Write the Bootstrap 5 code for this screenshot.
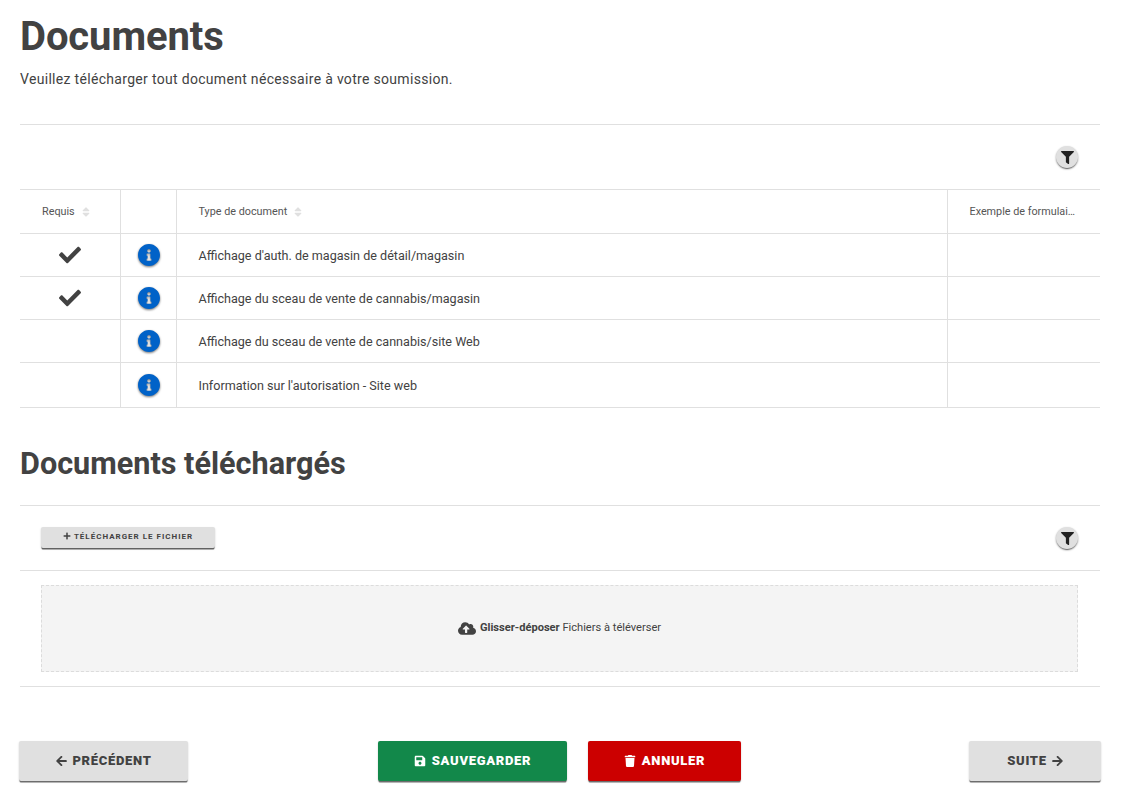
<!DOCTYPE html>
<html lang="fr">
<head>
<meta charset="utf-8">
<title>Documents</title>
<link href="https://cdn.jsdelivr.net/npm/bootstrap@5.3.0/dist/css/bootstrap.min.css" rel="stylesheet">
<style>
html, body { height: 798px; overflow: hidden; }
body { font-family: Roboto, "Liberation Sans", sans-serif; color: #424242; background: #fff; }
.page-wrap { width: 1127px; height: 798px; padding: 0 27px 0 20px; }
.page-title { font-size: 40px; font-weight: 700; line-height: 47px; letter-spacing: -.1px; margin: 13px 0 0; color: #424242; }
.page-sub { font-size: 14px; line-height: 20px; letter-spacing: .31px; margin: 9px 0 35px; color: #424242; }
.tool-row { height: 65px; border-top: 1px solid #e0e0e0; padding-right: 22px; }
.round-filter { width: 22px; height: 22px; padding: 0; border: 0; border-radius: 50%; background: #e0e0e0; box-shadow: 0 2px 1px -1px rgba(0,0,0,.35), 0 1px 2px rgba(0,0,0,.45); color: #212121; }
.round-filter svg { width: 13px; height: 13px; display: block; margin: 1px auto 0; }
.col-w-a { width: 100px; } .col-w-b { width: 56px; } .col-w-c { width: 153px; }
.doc-table { width: 100%; table-layout: fixed; margin: 0; border-collapse: collapse; color: #424242; }
.doc-table th, .doc-table td { padding: 2px 0 0 22px; border: 0; border-top: 1px solid #e0e0e0; border-right: 1px solid #e0e0e0; vertical-align: middle; white-space: nowrap; overflow: hidden; text-overflow: ellipsis; background: transparent; color: #424242; }
.doc-table th:last-child, .doc-table td:last-child { border-right: 0; }
.doc-table tr:last-child td { border-bottom: 1px solid #e0e0e0; height: 45px; }
.doc-table th { height: 44px; font-size: 10.8px; font-weight: 400; color: #555; }
.doc-table td { height: 43px; font-size: 12.58px; }
.doc-table .icon-cell { padding: 2px 0 0; text-align: center; }
.doc-table .info-cell { padding: 0 0 0 1px; text-align: center; }
.sort-ico { width: 8px; height: 12px; margin-left: 7px; vertical-align: -3px; fill: #e0e0e0; }
.check-ico { width: 22px; height: 22px; fill: #424242; display: block; margin: -3px auto 0; }
.info-ico { width: 22px; height: 22px; fill: #0062c8; display: block; margin: 0 auto; filter: drop-shadow(0 1px 1px rgba(0,0,0,.55)); }
.sub-title { font-size: 30.6px; font-weight: 700; line-height: 36px; margin: 38px 0 23px; color: #424242; }
.tool-row-two { height: 65px; border-top: 1px solid #e0e0e0; padding: 0 22px 0 21px; }
.upload-btn { width: 174px; height: 21px; margin-bottom: 2px; padding: 0; border: 0; border-radius: 2px; background: #e0e0e0; color: #424242; font-size: 8px; font-weight: 700; letter-spacing: 1px; box-shadow: 0 2px 0 -0.5px rgba(0,0,0,.55), 0 1px 2px rgba(0,0,0,.2); }
.upload-btn svg { width: 8px; height: 8px; fill: #424242; vertical-align: -1px; margin-right: 3px; }
.drop-holder { border-top: 1px solid #e0e0e0; border-bottom: 1px solid #e0e0e0; padding: 14px 22px 14px 21px; }
.drop-zone { height: 87px; background: #f4f4f4; border: 1px dashed #dcdcdc; font-size: 11.1px; color: #424242; }
.drop-zone svg { width: 18px; height: 15px; fill: #424242; margin-right: 4px; }
.action-row { display: grid; grid-template-columns: 1fr auto 1fr; margin: 54px -1px 0 -1px; }
.mid-actions { gap: 21px; margin-left: -1px; }
.act-btn { height: 40px; padding: 0; border: 0; border-radius: 2px; font-size: 13px; font-weight: 900; letter-spacing: .7px; text-transform: uppercase; box-shadow: 0 2px 0 -0.5px rgba(0,0,0,.5), 0 1px 2px rgba(0,0,0,.2); display: inline-flex; align-items: center; justify-content: center; gap: 5px; }
.act-btn svg { width: 11px; height: 12px; fill: currentColor; }
.btn-save svg, .btn-cancel svg { width: 12px; }
.btn-save, .btn-cancel { gap: 6px; }
.btn-prev { width: 169px; background: #e0e0e0; color: #424242; padding-left: 1px; }
.btn-next { width: 132px; background: #e0e0e0; color: #424242; }
.btn-save { width: 189px; background: #12884a; color: #fff; }
.btn-cancel { width: 153px; background: #cc0000; color: #fff; }
</style>
</head>
<body>
<svg width="0" height="0" class="position-absolute" aria-hidden="true">
  <symbol id="i-check" viewBox="0 0 512 512"><path d="M173.898 439.404l-166.4-166.4c-9.997-9.997-9.997-26.206 0-36.204l36.203-36.204c9.997-9.998 26.207-9.998 36.204 0L192 312.69 432.095 72.596c9.997-9.997 26.207-9.997 36.204 0l36.203 36.204c9.997 9.997 9.997 26.206 0 36.204l-294.4 294.401c-9.998 9.997-26.207 9.997-36.204-.001z"/></symbol>
  <symbol id="i-info" viewBox="8 8 496 496"><path d="M256 8C119.043 8 8 119.083 8 256c0 136.997 111.043 248 248 248s248-111.003 248-248C504 119.083 392.957 8 256 8zm0 110c23.196 0 42 18.804 42 42s-18.804 42-42 42-42-18.804-42-42 18.804-42 42-42zm56 254c0 6.627-5.373 12-12 12h-88c-6.627 0-12-5.373-12-12v-24c0-6.627 5.373-12 12-12h12v-64h-12c-6.627 0-12-5.373-12-12v-24c0-6.627 5.373-12 12-12h64c6.627 0 12 5.373 12 12v100h12c6.627 0 12 5.373 12 12v24z"/></symbol>
  <symbol id="i-filter" viewBox="0 0 512 512"><path fill="currentColor" d="M487.976 0H24.028C2.71 0-8.047 25.866 7.058 40.971L192 225.941V432c0 7.831 3.821 15.17 10.237 19.662l80 55.98C298.02 518.69 320 507.493 320 487.98V225.941l184.947-184.97C520.021 25.896 509.338 0 487.976 0z"/></symbol>
  <symbol id="i-sort" viewBox="0 0 320 512"><path d="M41 288h238c21.4 0 32.1 25.9 17 41L177 448c-9.4 9.4-24.6 9.4-33.900 0L24 329c-15.100-15.100-4.400-41 17-41zm255-105L177 64c-9.400-9.400-24.600-9.400-33.900 0L24 183c-15.100 15.100-4.400 41 17 41h238c21.400 0 32.100-25.900 17-41z"/></symbol>
  <symbol id="i-plus" viewBox="0 0 448 512"><path d="M416 208H272V64c0-17.670-14.330-32-32-32h-32c-17.670 0-32 14.330-32 32v144H32c-17.670 0-32 14.330-32 32v32c0 17.670 14.330 32 32 32h144v144c0 17.670 14.330 32 32 32h32c17.670 0 32-14.330 32-32V304h144c17.670 0 32-14.330 32-32v-32c0-17.670-14.330-32-32-32z"/></symbol>
  <symbol id="i-cloud" viewBox="0 0 640 512"><path d="M537.6 226.6c4.1-10.7 6.4-22.4 6.4-34.6 0-53-43-96-96-96-19.7 0-38.1 6-53.3 16.2C367 64.2 315.3 32 256 32c-88.4 0-160 71.6-160 160 0 2.7.1 5.4.2 8.1C40.2 219.8 0 273.2 0 336c0 79.5 64.5 144 144 144h368c70.7 0 128-57.3 128-128 0-61.9-44-113.6-102.4-125.4zM393.4 288H328v112c0 8.8-7.2 16-16 16h-48c-8.8 0-16-7.2-16-16V288h-65.4c-14.3 0-21.4-17.2-11.3-27.3l105.4-105.4c6.2-6.2 16.4-6.2 22.6 0l105.4 105.4c10.1 10.1 2.9 27.3-11.3 27.3z"/></symbol>
  <symbol id="i-left" viewBox="0 0 448 512"><path d="M257.500 445.100l-22.200 22.200c-9.400 9.400-24.600 9.400-33.900 0L7 273c-9.400-9.400-9.400-24.600 0-33.900L201.400 44.700c9.400-9.400 24.600-9.400 33.900 0l22.200 22.200c9.500 9.500 9.300 25-.4 34.300L136.600 216H424c13.300 0 24 10.700 24 24v32c0 13.300-10.700 24-24 24H136.600l120.500 114.800c9.800 9.300 10 24.800.4 34.300z"/></symbol>
  <symbol id="i-right" viewBox="0 0 448 512"><path d="M190.500 66.900l22.200-22.200c9.400-9.400 24.600-9.400 33.900 0L441 239c9.400 9.400 9.400 24.600 0 33.900L246.600 467.300c-9.400 9.400-24.600 9.400-33.900 0l-22.200-22.200c-9.500-9.500-9.300-25 .4-34.300L311.400 296H24c-13.300 0-24-10.700-24-24v-32c0-13.300 10.700-24 24-24h287.400L190.900 101.200c-9.800-9.300-10-24.800-.4-34.300z"/></symbol>
  <symbol id="i-save" viewBox="0 0 448 512"><path d="M433.941 129.941l-83.882-83.882A48 48 0 0 0 316.118 32H48C21.490 32 0 53.490 0 80v352c0 26.510 21.490 48 48 48h352c26.510 0 48-21.490 48-48V163.882a48 48 0 0 0-14.059-33.941zM224 416c-35.346 0-64-28.654-64-64 0-35.346 28.654-64 64-64s64 28.654 64 64c0 35.346-28.654 64-64 64zm96-304.520V212c0 6.627-5.373 12-12 12H76c-6.627 0-12-5.373-12-12V108c0-6.627 5.373-12 12-12h228.520c3.183 0 6.235 1.264 8.485 3.515l3.480 3.480A11.996 11.996 0 0 1 320 111.480z"/></symbol>
  <symbol id="i-trash" viewBox="0 0 448 512"><path d="M432 32H312l-9.400-18.700A24 24 0 0 0 281.100 0H166.800a23.720 23.720 0 0 0-21.400 13.300L136 32H16A16 16 0 0 0 0 48v32a16 16 0 0 0 16 16h416a16 16 0 0 0 16-16V48a16 16 0 0 0-16-16zM53.200 467a48 48 0 0 0 47.900 45h245.800a48 48 0 0 0 47.900-45L416 128H32z"/></symbol>
</svg>

<div class="page-wrap">
  <h1 class="page-title">Documents</h1>
  <p class="page-sub">Veuillez télécharger tout document nécessaire à votre soumission.</p>

  <div class="tool-row d-flex align-items-center justify-content-end">
    <button type="button" class="round-filter" aria-label="Filtrer"><svg><use href="#i-filter"/></svg></button>
  </div>

  <table class="table doc-table">
    <colgroup><col class="col-w-a"><col class="col-w-b"><col><col class="col-w-c"></colgroup>
    <thead>
      <tr>
        <th>Requis<svg class="sort-ico"><use href="#i-sort"/></svg></th>
        <th></th>
        <th>Type de document<svg class="sort-ico"><use href="#i-sort"/></svg></th>
        <th>Exemple de formulai…</th>
      </tr>
    </thead>
    <tbody>
      <tr>
        <td class="icon-cell"><svg class="check-ico"><use href="#i-check"/></svg></td>
        <td class="info-cell"><svg class="info-ico"><use href="#i-info"/></svg></td>
        <td>Affichage d'auth. de magasin de détail/magasin</td>
        <td></td>
      </tr>
      <tr>
        <td class="icon-cell"><svg class="check-ico"><use href="#i-check"/></svg></td>
        <td class="info-cell"><svg class="info-ico"><use href="#i-info"/></svg></td>
        <td>Affichage du sceau de vente de cannabis/magasin</td>
        <td></td>
      </tr>
      <tr>
        <td class="icon-cell"></td>
        <td class="info-cell"><svg class="info-ico"><use href="#i-info"/></svg></td>
        <td>Affichage du sceau de vente de cannabis/site Web</td>
        <td></td>
      </tr>
      <tr>
        <td class="icon-cell"></td>
        <td class="info-cell"><svg class="info-ico"><use href="#i-info"/></svg></td>
        <td>Information sur l'autorisation - Site web</td>
        <td></td>
      </tr>
    </tbody>
  </table>

  <h2 class="sub-title">Documents téléchargés</h2>

  <div class="tool-row-two d-flex align-items-center justify-content-between">
    <button type="button" class="upload-btn text-uppercase"><svg><use href="#i-plus"/></svg>Télécharger le fichier</button>
    <button type="button" class="round-filter" aria-label="Filtrer"><svg><use href="#i-filter"/></svg></button>
  </div>

  <div class="drop-holder">
    <div class="drop-zone d-flex align-items-center justify-content-center">
      <svg><use href="#i-cloud"/></svg><span><strong>Glisser-déposer</strong> Fichiers à téléverser</span>
    </div>
  </div>

  <div class="action-row">
    <div><button type="button" class="act-btn btn-prev"><svg><use href="#i-left"/></svg>Précédent</button></div>
    <div class="d-flex mid-actions">
      <button type="button" class="act-btn btn-save"><svg><use href="#i-save"/></svg>Sauvegarder</button>
      <button type="button" class="act-btn btn-cancel"><svg><use href="#i-trash"/></svg>Annuler</button>
    </div>
    <div class="text-end"><button type="button" class="act-btn btn-next">Suite<svg><use href="#i-right"/></svg></button></div>
  </div>
</div>
<script src="https://cdn.jsdelivr.net/npm/bootstrap@5.3.0/dist/js/bootstrap.bundle.min.js"></script>
</body>
</html>
